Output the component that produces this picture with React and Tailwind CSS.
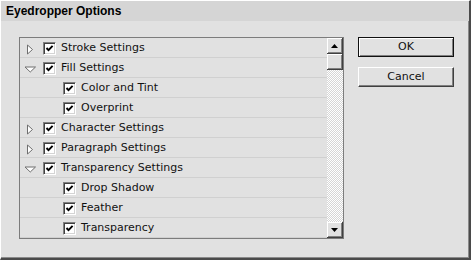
import React from 'react';

const rows = [
  { label: 'Stroke Settings', level: 0, arrow: 'right' },
  { label: 'Fill Settings', level: 0, arrow: 'down' },
  { label: 'Color and Tint', level: 1 },
  { label: 'Overprint', level: 1 },
  { label: 'Character Settings', level: 0, arrow: 'right' },
  { label: 'Paragraph Settings', level: 0, arrow: 'right' },
  { label: 'Transparency Settings', level: 0, arrow: 'down' },
  { label: 'Drop Shadow', level: 1 },
  { label: 'Feather', level: 1 },
  { label: 'Transparency', level: 1 },
];

function Arrow({ dir }) {
  return (
    <svg width="12" height="12" viewBox="0 0 12 12" className="block">
      {dir === 'right' ? (
        <polygon points="3.5,2 8.5,6.5 3.5,11" fill="#ffffff" stroke="#6e6e6e" strokeWidth="1" />
      ) : (
        <polygon points="1,4 11.5,4 6.25,9" fill="#ffffff" stroke="#6e6e6e" strokeWidth="1" />
      )}
    </svg>
  );
}

function Checkbox() {
  return (
    <div className="w-[13px] h-[13px] shrink-0 bg-white border border-t-[#808080] border-l-[#808080] border-r-white border-b-white shadow-[inset_1px_1px_0_#404040,inset_-1px_-1px_0_#d4d4d4] flex items-center justify-center">
      <svg width="9" height="9" viewBox="0 0 9 9" className="block">
        <path d="M1.5 4 L3.5 6.2 L7.6 1.8" fill="none" stroke="#000" strokeWidth="1.9" />
      </svg>
    </div>
  );
}

function ScrollButton({ up }) {
  return (
    <div className="w-[16px] h-[16px] bg-[#e1e1e1] border-r border-b border-[#404040] shadow-[inset_1px_1px_0_#ffffff,inset_-1px_-1px_0_#808080] flex items-center justify-center">
      <svg width="7" height="4" viewBox="0 0 7 4" className="block">
        {up ? <polygon points="3.5,0 7,4 0,4" fill="#000" /> : <polygon points="0,0 7,0 3.5,4" fill="#000" />}
      </svg>
    </div>
  );
}

export default function App() {
  return (
    <div
      className="w-[471px] h-[260px] bg-[#e1e1e1] border-t border-l border-white border-r-2 border-b-2 border-r-[#4a4a4a] border-b-[#4a4a4a] shadow-[inset_-1px_-1px_0_#8a8a8a] flex flex-col overflow-hidden"
      style={{ fontFamily: '"DejaVu Sans", Verdana, sans-serif' }}
    >
      <div className="h-[20px] bg-[#d5d5d5] flex items-center pl-[5px]">
        <span className="text-[12px] font-bold text-black" style={{ fontFamily: '"Liberation Sans", Arial, sans-serif' }}>
          Eyedropper Options
        </span>
      </div>

      <div className="flex pl-[18px] pt-[16px]">
        <div className="w-[325px] h-[202px] border border-[#7c7c7c] flex">
          <div className="w-[307px] flex flex-col">
            {rows.map((r, i) => (
              <div key={i} className="h-[20px] pt-[2px] flex items-center border-b border-[#d0d0d0] text-[11px] text-[#111]">
                {r.level === 0 ? (
                  <div className="w-[23px] pl-[4px] shrink-0">
                    <Arrow dir={r.arrow} />
                  </div>
                ) : (
                  <div className="w-[43px] shrink-0" />
                )}
                <Checkbox />
                <span className="ml-[5px] whitespace-nowrap">{r.label}</span>
              </div>
            ))}
          </div>
          <div className="w-[16px] flex flex-col bg-[repeating-conic-gradient(#ffffff_0_25%,#d6d6d6_0_50%)] bg-[length:2px_2px]">
            <ScrollButton up />
            <div className="w-[16px] h-[16px] bg-[#e1e1e1] border-r border-b border-[#404040] shadow-[inset_1px_1px_0_#ffffff,inset_-1px_-1px_0_#808080]" />
            <div className="flex-1" />
            <ScrollButton />
          </div>
        </div>

        <div className="ml-[14px] flex flex-col gap-[10px] text-[11px] text-[#111]">
          <button className="w-[96px] h-[20px] bg-[#e1e1e1] border border-[#111] shadow-[inset_1px_1px_0_#ffffff,inset_-1px_-1px_0_#808080] flex items-center justify-center">
            OK
          </button>
          <button className="w-[96px] h-[20px] bg-[#e1e1e1] border-t border-l border-white border-r border-b border-r-[#404040] border-b-[#404040] shadow-[inset_-1px_-1px_0_#808080] flex items-center justify-center">
            Cancel
          </button>
        </div>
      </div>
    </div>
  );
}
